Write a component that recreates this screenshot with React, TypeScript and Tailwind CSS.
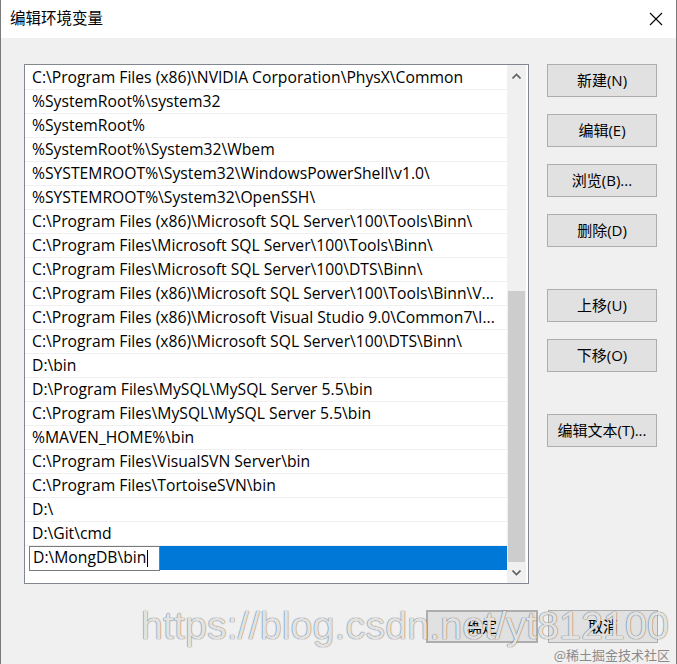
import React from "react";

const rows = [
  "C:\\Program Files (x86)\\NVIDIA Corporation\\PhysX\\Common",
  "%SystemRoot%\\system32",
  "%SystemRoot%",
  "%SystemRoot%\\System32\\Wbem",
  "%SYSTEMROOT%\\System32\\WindowsPowerShell\\v1.0\\",
  "%SYSTEMROOT%\\System32\\OpenSSH\\",
  "C:\\Program Files (x86)\\Microsoft SQL Server\\100\\Tools\\Binn\\",
  "C:\\Program Files\\Microsoft SQL Server\\100\\Tools\\Binn\\",
  "C:\\Program Files\\Microsoft SQL Server\\100\\DTS\\Binn\\",
  "C:\\Program Files (x86)\\Microsoft SQL Server\\100\\Tools\\Binn\\V...",
  "C:\\Program Files (x86)\\Microsoft Visual Studio 9.0\\Common7\\I...",
  "C:\\Program Files (x86)\\Microsoft SQL Server\\100\\DTS\\Binn\\",
  "D:\\bin",
  "D:\\Program Files\\MySQL\\MySQL Server 5.5\\bin",
  "C:\\Program Files\\MySQL\\MySQL Server 5.5\\bin",
  "%MAVEN_HOME%\\bin",
  "C:\\Program Files\\VisualSVN Server\\bin",
  "C:\\Program Files\\TortoiseSVN\\bin",
  "D:\\",
  "D:\\Git\\cmd",
];

const font = { fontFamily: '"Segoe UI", "Open Sans", "Noto Sans CJK SC", sans-serif' };

function Btn({ label, className = "" }: { label: string; className?: string }) {
  return (
    <div
      className={`w-[110px] h-[33px] flex items-center justify-center bg-[#e1e1e1] border border-[#adadad] text-[15px] text-black ${className}`}
    >
      {label}
    </div>
  );
}

export default function App() {
  return (
    <div
      className="relative w-[677px] h-[664px] bg-[#f0f0f0] border-l border-r border-[#7a7a7a] overflow-hidden flex flex-col"
      style={font}
    >
      <div className="h-[38px] bg-white flex items-center justify-between pl-[9px] pr-[12px] shrink-0">
        <span className="text-[15.5px] text-black">编辑环境变量</span>
        <svg width="14" height="14" viewBox="0 0 14 14" className="mr-[1px]">
          <path d="M1 1 L13 13 M13 1 L1 13" stroke="#000" strokeWidth="1.1" fill="none" />
        </svg>
      </div>

      <div className="flex pl-[23px] pt-[26px]">
        <div className="w-[505px] h-[520px] border border-[#828790] bg-white flex">
          <div className="flex-1 flex flex-col pt-[1px]">
            {rows.map((r, i) => (
              <div
                key={i}
                className="h-[24px] border-b border-[#f0f0f0] pl-[7px] flex items-center text-[15.7px] text-black whitespace-nowrap overflow-hidden"
              >
                {r}
              </div>
            ))}
            <div className="h-[24px] flex items-center">
              <div className="h-[24px] w-[4px] bg-white" />
              <div className="h-[25px] w-[131px] border border-[#7a7a7a] bg-white flex items-center pl-[3px] text-[15.7px] text-black">
                D:\MongDB\bin
                <span className="inline-block w-[1px] h-[17px] bg-black ml-[1px]" />
              </div>
              <div className="flex-1 h-[24px] bg-[#0078d7]" />
            </div>
          </div>
          <div className="w-[19px] bg-[#f0f0f0] flex flex-col items-center mr-[2px]">
            <div className="h-[21px] w-full flex items-center justify-center">
              <svg width="9" height="6" viewBox="0 0 9 6">
                <path d="M0.5 5.5 L4.5 1.5 L8.5 5.5" stroke="#606060" strokeWidth="1.6" fill="none" />
              </svg>
            </div>
            <div className="h-[205px]" />
            <div className="w-[17px] h-[271px] bg-[#cdcdcd]" />
            <div className="flex-1 w-full flex items-center justify-center">
              <svg width="9" height="6" viewBox="0 0 9 6">
                <path d="M0.5 0.5 L4.5 4.5 L8.5 0.5" stroke="#606060" strokeWidth="1.6" fill="none" />
              </svg>
            </div>
          </div>
        </div>

        <div className="ml-[18px] flex flex-col">
          <Btn label="新建(N)" />
          <Btn label="编辑(E)" className="mt-[17px]" />
          <Btn label="浏览(B)..." className="mt-[17px]" />
          <Btn label="删除(D)" className="mt-[17px]" />
          <Btn label="上移(U)" className="mt-[42px]" />
          <Btn label="下移(O)" className="mt-[17px]" />
          <Btn label="编辑文本(T)..." className="mt-[42px]" />
        </div>
      </div>

      <div className="flex justify-end pr-[18px] pt-[26px] gap-[10px]">
        <Btn label="确定" className="w-[112px] border-2 border-[#0078d7]" />
        <Btn label="取消" />
      </div>

      <div
        className="absolute left-[140px] top-[606px] text-[39.6px] leading-none text-white/85 whitespace-nowrap"
        style={{
          fontFamily: '"Liberation Sans", Arial, sans-serif',
          textShadow: "0 0 1px rgba(0,0,0,0.5), 0 0 1px rgba(0,0,0,0.5)",
        }}
      >
        https://blog.csdn.net/yt812100
      </div>
      <div
        className="absolute right-[6px] bottom-[3px] text-[13px] leading-none text-[#8a8a8a] whitespace-nowrap"
        style={{ fontFamily: '"Noto Sans CJK SC", sans-serif' }}
      >
        @稀土掘金技术社区
      </div>
    </div>
  );
}
